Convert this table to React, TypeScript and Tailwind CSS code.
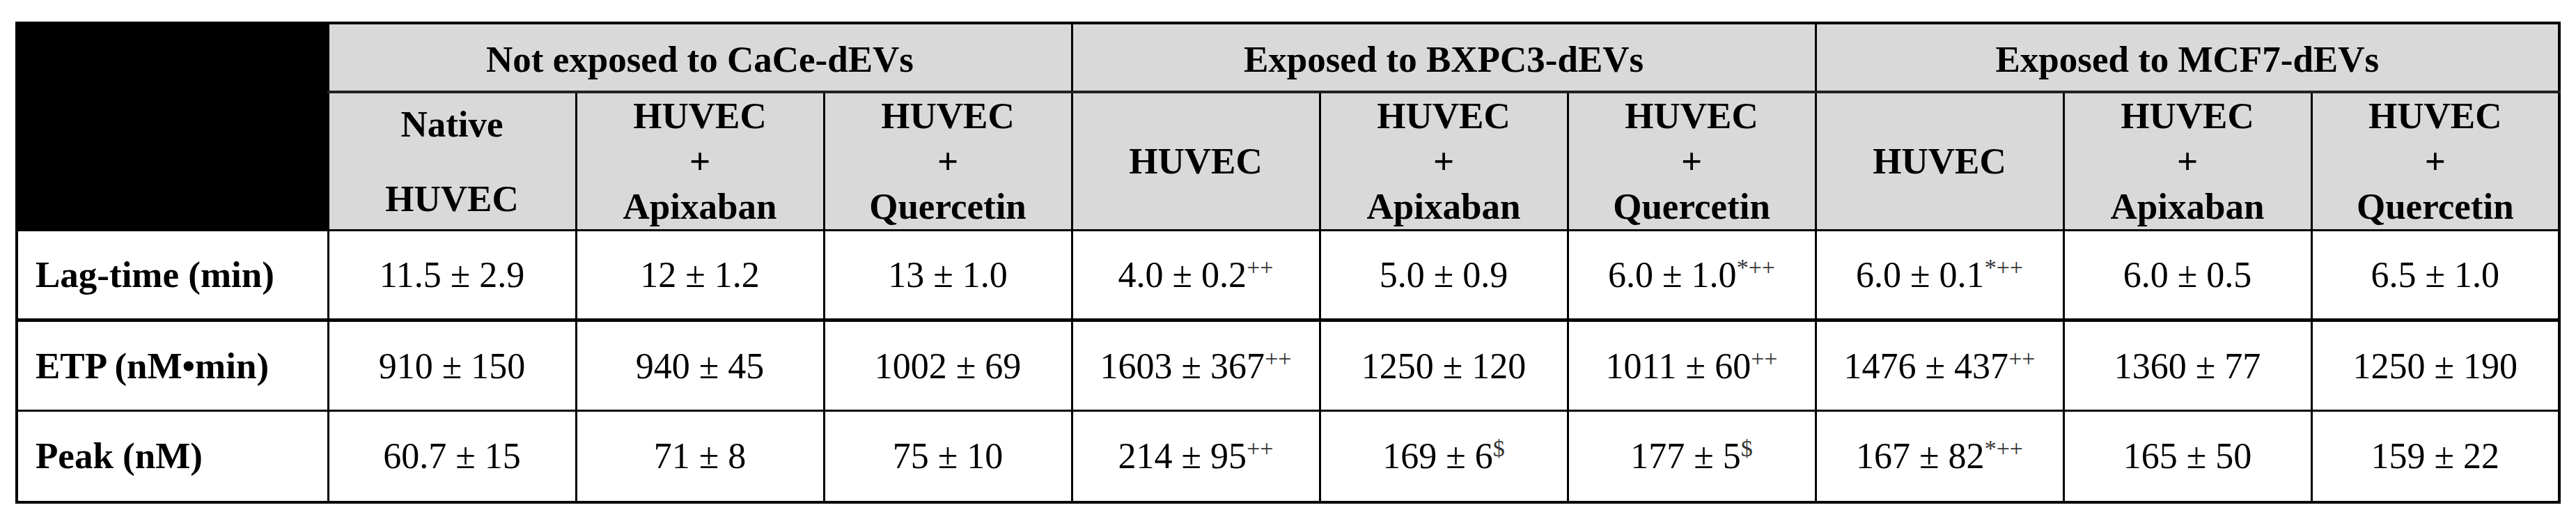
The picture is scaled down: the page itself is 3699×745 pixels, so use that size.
const groups = ["Not exposed to CaCe-dEVs", "Exposed to BXPC3-dEVs", "Exposed to MCF7-dEVs"];

type Val = { v: string; sup?: string };

const rows: { label: string; h: string; line: string; vals: Val[] }[] = [
  {
    label: "Lag-time (min)",
    h: "h-[129px]",
    line: "border-b-[5px]",
    vals: [
      { v: "11.5 ± 2.9" },
      { v: "12 ± 1.2" },
      { v: "13 ± 1.0" },
      { v: "4.0 ± 0.2", sup: "++" },
      { v: "5.0 ± 0.9" },
      { v: "6.0 ± 1.0", sup: "*++" },
      { v: "6.0 ± 0.1", sup: "*++" },
      { v: "6.0 ± 0.5" },
      { v: "6.5 ± 1.0" },
    ],
  },
  {
    label: "ETP (nM•min)",
    h: "h-[130px]",
    line: "",
    vals: [
      { v: "910 ± 150" },
      { v: "940 ± 45" },
      { v: "1002 ± 69" },
      { v: "1603 ± 367", sup: "++" },
      { v: "1250 ± 120" },
      { v: "1011 ± 60", sup: "++" },
      { v: "1476 ± 437", sup: "++" },
      { v: "1360 ± 77" },
      { v: "1250 ± 190" },
    ],
  },
  {
    label: "Peak (nM)",
    h: "h-[131px]",
    line: "",
    vals: [
      { v: "60.7 ± 15" },
      { v: "71 ± 8" },
      { v: "75 ± 10" },
      { v: "214 ± 95", sup: "++" },
      { v: "169 ± 6", sup: "$" },
      { v: "177 ± 5", sup: "$" },
      { v: "167 ± 82", sup: "*++" },
      { v: "165 ± 50" },
      { v: "159 ± 22" },
    ],
  },
];

function Treatment({ drug }: { drug: string }) {
  return (
    <>
      <div>HUVEC</div>
      <div>+</div>
      <div>{drug}</div>
    </>
  );
}

export default function App() {
  const cell = "border-[3px] border-black";
  return (
    <div className="w-[3699px] h-[745px] bg-white pt-[31px] pl-[22px] font-['Liberation_Serif','Times_New_Roman',serif] text-black">
      <table className="table-fixed border-collapse w-[3652px] border-[4px] border-black">
        <colgroup>
          <col className="w-[447px]" />
          {Array.from({ length: 9 }).map((_, i) => (
            <col key={i} className="w-[356px]" />
          ))}
        </colgroup>
        <thead className="font-bold text-[53px] leading-[65px]">
          <tr className="h-[99px] bg-[#d9d9d9]">
            <th rowSpan={2} className={`${cell} bg-black`} />
            {groups.map((g) => (
              <th key={g} colSpan={3} className={`${cell} border-b-[4px] border-b-[#222] font-bold pt-[6px]`}>
                {g}
              </th>
            ))}
          </tr>
          <tr className="h-[198px] bg-[#d9d9d9]">
            {[0, 1, 2].map((gi) => (
              <>
                <th key={`a${gi}`} className={`${cell} font-bold ${gi === 0 ? "align-top pt-[12px]" : "align-middle"}`}>
                  {gi === 0 ? (
                    <>
                      <div>Native</div>
                      <div className="mt-[42px]">HUVEC</div>
                    </>
                  ) : (
                    <div>HUVEC</div>
                  )}
                </th>
                <th key={`b${gi}`} className={`${cell} font-bold`}>
                  <Treatment drug="Apixaban" />
                </th>
                <th key={`c${gi}`} className={`${cell} font-bold`}>
                  <Treatment drug="Quercetin" />
                </th>
              </>
            ))}
          </tr>
        </thead>
        <tbody className="leading-[65px]">
          {rows.map((r) => (
            <tr key={r.label} className={r.h}>
              <td className={`${cell} ${r.line} pl-[25px] text-left font-bold text-[53px]`}>{r.label}</td>
              {r.vals.map((c, i) => (
                <td key={i} className={`${cell} ${r.line} text-center text-[52px]`}>
                  {c.v}
                  {c.sup && <sup className="text-[34px] text-[#333]">{c.sup}</sup>}
                </td>
              ))}
            </tr>
          ))}
        </tbody>
      </table>
    </div>
  );
}
